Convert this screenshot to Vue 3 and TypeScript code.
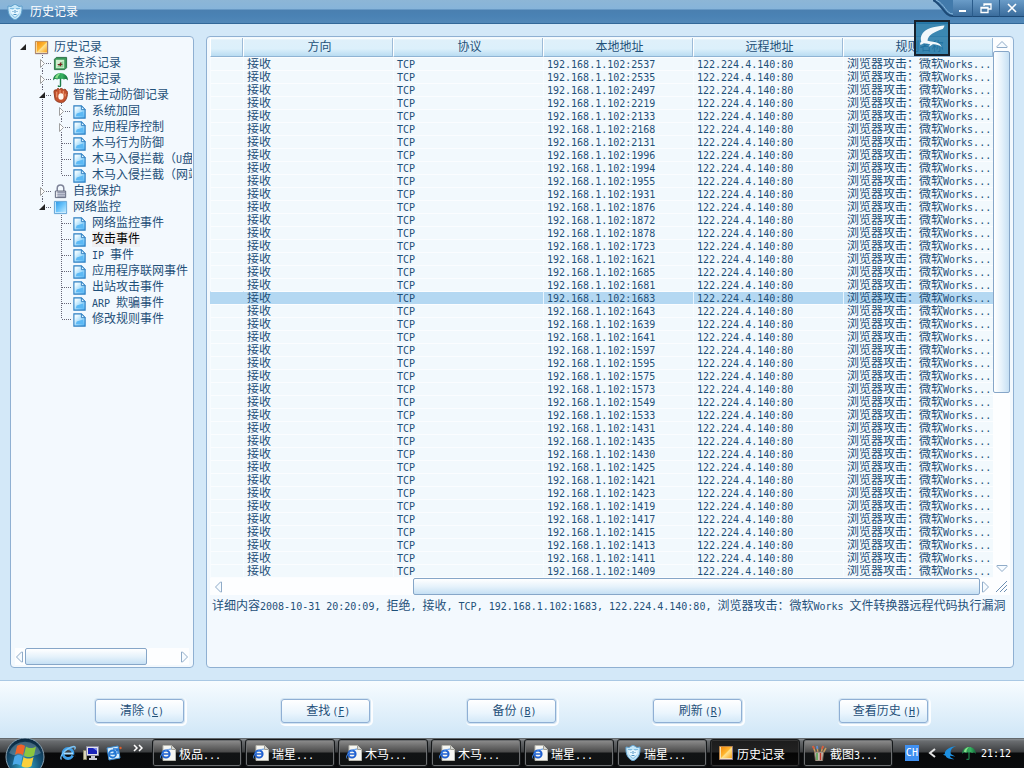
<script setup lang="ts">
import { h, ref, type FunctionalComponent } from 'vue'

type Cell = 'blank' | 'v' | 't' | 'l' | 'open' | 'openroot' | 'openlast' | 'closed'
interface Node { cells: Cell[]; icon: string; text: string }

/* Splits a string so that Latin runs get the half-width face. */
const Mixed: FunctionalComponent<{ text: string }> = (props) =>
  h('span', (props.text.match(/[\x20-\x7e]+|[^\x20-\x7e]+/g) ?? []).map((part) =>
    /^[\x20-\x7e]/.test(part) ? h('span', { class: 'latin' }, part) : part))
Mixed.props = ['text']

const nodes: Node[] = [
  { cells: ['openroot'], icon: 'book', text: '历史记录' },
  { cells: ['blank', 'closed'], icon: 'scan', text: '查杀记录' },
  { cells: ['blank', 'closed'], icon: 'umbrella', text: '监控记录' },
  { cells: ['blank', 'open'], icon: 'glove', text: '智能主动防御记录' },
  { cells: ['blank', 'v', 'closed'], icon: 'page', text: '系统加固' },
  { cells: ['blank', 'v', 'closed'], icon: 'page', text: '应用程序控制' },
  { cells: ['blank', 'v', 't'], icon: 'page', text: '木马行为防御' },
  { cells: ['blank', 'v', 't'], icon: 'page', text: '木马入侵拦截（U盘拦截）' },
  { cells: ['blank', 'v', 'l'], icon: 'page', text: '木马入侵拦截（网站拦截）' },
  { cells: ['blank', 'closed'], icon: 'lock', text: '自我保护' },
  { cells: ['blank', 'openlast'], icon: 'blue', text: '网络监控' },
  { cells: ['blank', 'blank', 't'], icon: 'page', text: '网络监控事件' },
  { cells: ['blank', 'blank', 't'], icon: 'page', text: '攻击事件' },
  { cells: ['blank', 'blank', 't'], icon: 'page', text: 'IP 事件' },
  { cells: ['blank', 'blank', 't'], icon: 'page', text: '应用程序联网事件' },
  { cells: ['blank', 'blank', 't'], icon: 'page', text: '出站攻击事件' },
  { cells: ['blank', 'blank', 't'], icon: 'page', text: 'ARP 欺骗事件' },
  { cells: ['blank', 'blank', 'l'], icon: 'page', text: '修改规则事件' },
]
const currentNode = ref(12)

const guides: Record<Cell, string> = {
  blank: '',
  v: 'M9.5 0V16',
  t: 'M9.5 0V16M10 8.5H19',
  l: 'M9.5 0V8M10 8.5H19',
  open: 'M9.5 0V3M9.5 12V16M13 8.5H19',
  openroot: '',
  openlast: 'M9.5 0V3M13 8.5H19',
  closed: 'M9.5 0V3M9.5 13V16M13 8.5H19',
}

const columns = ['', '方向', '协议', '本地地址', '远程地址', '规则名称']
const ports = [
  2537, 2535, 2497, 2219, 2133, 2168, 2131, 1996, 1994, 1955, 1931, 1876, 1872, 1878,
  1723, 1621, 1685, 1681, 1683, 1643, 1639, 1641, 1597, 1595, 1575, 1573, 1549, 1533,
  1431, 1435, 1430, 1425, 1421, 1423, 1419, 1417, 1415, 1413, 1411, 1409, 1407,
]
const selected = ref(18)

const actions = [
  { label: '清除', key: 'C' },
  { label: '查找', key: 'F' },
  { label: '备份', key: 'B' },
  { label: '刷新', key: 'R' },
  { label: '查看历史', key: 'H' },
]

const tasks = [
  { icon: 'ie', text: '极品...' },
  { icon: 'ie', text: '瑞星...' },
  { icon: 'ie', text: '木马...' },
  { icon: 'ie', text: '木马...' },
  { icon: 'ie', text: '瑞星...' },
  { icon: 'shield', text: '瑞星...' },
  { icon: 'book', text: '历史记录' },
  { icon: 'paint', text: '截图3...' },
]
</script>

<template>
  <div class="screen">
    <svg class="defs" aria-hidden="true">
      <defs>
        <linearGradient id="gOrange" x1="0" y1="0" x2="1" y2="1">
          <stop offset="0" stop-color="#f28a10" /><stop offset=".45" stop-color="#ffb52e" /><stop offset=".55" stop-color="#ffe08a" /><stop offset="1" stop-color="#f6a21c" />
        </linearGradient>
        <linearGradient id="gBlue" x1="0" y1="0" x2="1" y2="1">
          <stop offset="0" stop-color="#2f9be8" /><stop offset=".5" stop-color="#6cc4fb" /><stop offset="1" stop-color="#bfe9ff" />
        </linearGradient>
        <linearGradient id="gPage" x1="0" y1="0" x2="1" y2="1">
          <stop offset=".2" stop-color="#eefaff" /><stop offset=".55" stop-color="#a5dcfc" /><stop offset="1" stop-color="#4aaef0" />
        </linearGradient>
        <linearGradient id="gGreen" x1="0" y1="0" x2="1" y2="0">
          <stop offset="0" stop-color="#1d7d4a" /><stop offset=".6" stop-color="#36b260" /><stop offset="1" stop-color="#12683a" />
        </linearGradient>
        <radialGradient id="gOrb" cx=".5" cy=".75" r=".7">
          <stop offset="0" stop-color="#3bb6d6" /><stop offset=".55" stop-color="#18587c" /><stop offset="1" stop-color="#0c2a42" />
        </radialGradient>
        <symbol id="i-book" viewBox="0 0 16 16">
          <path d="M1.5 1.5h13v13h-13z" fill="#f8e3b4" stroke="#b98346" />
          <path d="M3 2h11v11H3z" fill="url(#gOrange)" />
          <path d="M1.5 14.5h13v-13" fill="none" stroke="#8f7a8a" />
        </symbol>
        <symbol id="i-blue" viewBox="0 0 16 16">
          <path d="M1.5 1.5h13v13h-13z" fill="#d6f0ff" stroke="#5a9fd4" />
          <path d="M3 2h11v11H3z" fill="url(#gBlue)" />
        </symbol>
        <symbol id="i-scan" viewBox="0 0 16 16">
          <path d="M1.5 3.5l2-2h11v11l-2 2h-11z" fill="#3b9a58" stroke="#2b6d45" />
          <path d="M3 4h9v9H3z" fill="#d0eecf" />
          <path d="M4 12l7-7v7z" fill="#8ed49a" />
          <path d="M5 9h5M8 7v4M6 10l3-3" stroke="#7b2420" stroke-width="1.200" />
        </symbol>
        <symbol id="i-umbrella" viewBox="0 0 16 16">
          <path d="M0 9C0 4 4 1 8 1s8 3 8 8c-2-2-3-2-4.500-1C10 7 9 7 8 8 7 7 6 7 4.500 8 3 7 2 7 0 9z" fill="url(#gGreen)" />
          <path d="M5 7C5 5 6 3 8 1.500c-3 0-5 2-6 5z" fill="#8be08a" />
          <path d="M8 7v7c0 2-2 2-2.500.5" fill="none" stroke="#1d7d4a" stroke-width="1.500" />
        </symbol>
        <symbol id="i-glove" viewBox="0 0 16 16">
          <path d="M1 4c0-2 2-3 2.500-1C4 0 6 0 7 1.500 8 0 10 0 11 2c1-1 3-1 3 1 2 0 1.500 3 1 6-1 4-3 6.500-6 6.500S2 14 2 11z" fill="#c4522e" stroke="#8f3a20" />
          <path d="M4 4v6M7.500 2v4M11 3v4M13 6v3" stroke="#f2a67e" />
          <ellipse cx="8.500" cy="9" rx="2.800" ry="3.500" fill="#fff6ee" />
        </symbol>
        <symbol id="i-lock" viewBox="0 0 16 16">
          <path d="M4.500 8V4.500a3.500 3.500 0 017 0V8" fill="none" stroke="#7e8398" stroke-width="1.600" />
          <path d="M2.500 7.500h11v7h-11z" fill="#c9cddb" stroke="#5c6278" />
          <path d="M3 9h10M3 11h10M3 13h10" stroke="#8e94aa" />
          <path d="M4 8v6" stroke="#fff" />
        </symbol>
        <symbol id="i-page" viewBox="0 0 16 16">
          <path d="M2 2h8l4 4v9H2z" fill="url(#gPage)" stroke="#2d7fc2" stroke-width="1.200" />
          <path d="M10 2v4h4z" fill="#e9f8ff" stroke="#2d7fc2" />
          <path d="M5 10l7-2v5H4z" fill="#5cb9f5" />
        </symbol>
        <symbol id="i-shield" viewBox="0 0 16 16">
          <path d="M1 2l3 .5L8 0l4 2.500L15 2c.5 7-1.500 11.500-7 14C2.500 13.500.5 9 1 2z" fill="#c4e6f8" stroke="#5f9fcb" />
          <path d="M3 4h10c0 5-1.500 7.500-5 10-3.500-2.500-5-5-5-10z" fill="#7cbce2" />
          <path d="M3 5l3 .5L8 4l2 1.500L13 5l-.5 4L8 13 3.500 9z" fill="#e6f7ff" />
          <path d="M5.500 7.500h1M9.500 7.500h1M8 6v3M6.500 10.500h3" stroke="#4c92c2" />
        </symbol>
        <symbol id="i-e" viewBox="0 0 16 16">
          <circle cx="8" cy="8.500" r="5" fill="none" stroke="#3f9fe8" stroke-width="2.800" />
          <path d="M4 8.500h9" stroke="#a7dcff" stroke-width="2" />
          <path d="M11 9.700h5V12z" fill="#141414" />
          <path d="M1.500 14.500C-1 12 5 3 14 1.500c1.500 0 1.500 1.500.5 3" fill="none" stroke="#7cc4f5" stroke-width="1.300" />
        </symbol>
        <symbol id="i-ie" viewBox="0 0 16 16">
          <path d="M3 .5h8.500l4 4v11H3z" fill="#f6f6f2" stroke="#b8b8b0" />
          <path d="M11.500.5v4h4" fill="#d8d8d4" stroke="#a0a098" />
          <circle cx="6" cy="9" r="3.600" fill="none" stroke="#1e5fd0" stroke-width="2" />
          <path d="M3 9h7" stroke="#1e5fd0" stroke-width="1.500" />
          <path d="M1 13.500C-1 11 4 4.500 11 4" fill="none" stroke="#4a8fe8" />
        </symbol>
        <symbol id="i-paint" viewBox="0 0 16 16">
          <path d="M4.500 8L2 1M7 8L6 1M10 8l2-7M12 8l3-5" stroke="#c99a5c" stroke-width="1.500" />
          <path d="M2 1l1 3M12 1l-1 3" stroke="#d85a3c" stroke-width="1.800" />
          <path d="M6 1l.5 3" stroke="#5a8ad0" stroke-width="1.800" />
          <path d="M3.500 7h9L11.500 16h-7z" fill="#c8beb2" stroke="#7e6e60" />
          <path d="M6 8v7" stroke="#4fa04c" stroke-width="1.500" /><path d="M9.500 8v7" stroke="#c03a2c" stroke-width="1.500" />
        </symbol>
        <symbol id="i-pc" viewBox="0 0 16 16">
          <path d="M.5 5.500h3v9h-3z" fill="#d8d4b8" stroke="#8c8868" />
          <path d="M3.500 1.500h12v9h-12z" fill="#e2e2ea" stroke="#8a8aa0" />
          <path d="M5 3h9v6H5z" fill="#1a22b8" /><path d="M10 3h4v3z" fill="#7f8cf4" />
          <path d="M8 11h4v2h2v2H6v-2h2z" fill="#c6c6d2" />
        </symbol>
        <symbol id="i-mail" viewBox="0 0 16 16">
          <path d="M1 3l11-2 2 12-11 2z" fill="#d8eefc" stroke="#3c8bd0" />
          <circle cx="6.500" cy="9" r="3.500" fill="none" stroke="#2276d2" stroke-width="1.800" />
          <path d="M4 9h6M7 4h5v5M12 4L7 9" fill="none" stroke="#2276d2" stroke-width="1.400" />
          <circle cx="14.500" cy="3" r="1.200" fill="#e0602c" />
        </symbol>
        <symbol id="i-swallow" viewBox="0 0 16 16">
          <path d="M15 0C8 1 2 4 2 9l-2 1 3 1c1 3 5 4 10 4-3-1-5-2-5-4l6 1-5-3c-1-4 1-7 6-9z" fill="#1d8fe0" />
        </symbol>
      </defs>
    </svg>

    <header class="title">
      <svg class="logo"><use href="#i-shield" /></svg>
      <h1>历史记录</h1>
      <div class="winbtns">
        <svg class="swoop" viewBox="0 0 20 17" preserveAspectRatio="none" aria-hidden="true">
          <path d="M0 0h20v17C11 17 10 5 0 0z" fill="#427aab" />
          <path d="M0 0C10 5 11 16 20 16" fill="none" stroke="#1d4a77" stroke-width="2" />
          <path d="M3 0C12 4 13 14 20 14" fill="none" stroke="#8ab8dc" />
        </svg>
        <button type="button" aria-label="最小化"><svg viewBox="0 0 12 12"><path d="M2 9h7" stroke="#fff" stroke-width="2" /></svg></button>
        <button type="button" class="mid" aria-label="还原"><svg viewBox="0 0 12 12"><path d="M4 4V2h7v5H8M1 5.500h7v5H1zM4 2.500h7M1 6h7" fill="none" stroke="#fff" stroke-width="1.300" /></svg></button>
        <button type="button" class="end" aria-label="关闭"><svg viewBox="0 0 12 12"><path d="M2 2l8 8M10 2l-8 8" stroke="#fff" stroke-width="1.600" /></svg></button>
      </div>
    </header>

    <main class="work">
      <nav class="panel tree">
        <ul>
          <li v-for="(n, i) in nodes" :key="i" :class="{ current: i === currentNode }" @click="currentNode = i">
            <svg v-for="(c, j) in n.cells" :key="j" class="cell" viewBox="0 0 19 16">
              <path v-if="guides[c]" :d="guides[c]" class="guide" />
              <path v-if="c === 'closed'" d="M7.500 4.500v8l4-4z" class="twist" />
              <path v-if="c.startsWith('open')" d="M12 5v6H6z" class="twisted" />
            </svg>
            <svg class="icon" viewBox="0 0 16 16"><use :href="'#i-' + n.icon" /></svg>
            <span class="name"><Mixed :text="n.text" /></span>
          </li>
        </ul>
        <div class="hbar treebar">
          <button type="button" class="arrow" aria-label="向左"><svg viewBox="0 0 10 12"><path d="M7.500 1v10h-1L1.500 6l5-5z" /></svg></button>
          <div class="track"><div class="thumb treethumb"></div></div>
          <button type="button" class="arrow" aria-label="向右"><svg viewBox="0 0 10 12"><path d="M2.500 1v10h1l5-5-5-5z" /></svg></button>
        </div>
      </nav>

      <section class="panel list">
        <div class="grid">
          <div class="tablebox">
            <table>
              <colgroup><col class="first" /><col v-for="k in 5" :key="k" /></colgroup>
              <thead>
                <tr><th v-for="(c, i) in columns" :key="i" scope="col">{{ c }}</th></tr>
              </thead>
              <tbody>
                <tr v-for="(p, i) in ports" :key="i" :class="{ selected: i === selected }" @click="selected = i">
                  <td></td>
                  <td>接收</td>
                  <td><Mixed text="TCP" /></td>
                  <td><Mixed :text="'192.168.1.102:' + p" /></td>
                  <td><Mixed text="122.224.4.140:80" /></td>
                  <td><Mixed text="浏览器攻击：微软Works..." /></td>
                </tr>
              </tbody>
            </table>
          </div>
          <div class="vbar">
            <button type="button" class="arrow" aria-label="向上"><svg viewBox="0 0 12 10"><path d="M1 7.500h10v-1L6 1.500l-5 5z" /></svg></button>
            <div class="vtrack"><div class="thumb vthumb"></div></div>
            <button type="button" class="arrow" aria-label="向下"><svg viewBox="0 0 12 10"><path d="M1 2.500h10v1L6 8.500l-5-5z" /></svg></button>
          </div>
        </div>
        <div class="hbar listbar">
          <button type="button" class="arrow" aria-label="向左"><svg viewBox="0 0 10 12"><path d="M7.500 1v10h-1L1.500 6l5-5z" /></svg></button>
          <div class="track"><div class="thumb listthumb"></div></div>
          <button type="button" class="arrow" aria-label="向右"><svg viewBox="0 0 10 12"><path d="M2.500 1v10h1l5-5-5-5z" /></svg></button>
          <svg class="grip" viewBox="0 0 12 12"><path d="M0 11L11 0M4 11l7-7M8 11l3-3" stroke="#6d8fb2" /></svg>
        </div>
        <p class="detail"><Mixed text="详细内容2008-10-31 20:20:09, 拒绝, 接收, TCP, 192.168.1.102:1683, 122.224.4.140:80, 浏览器攻击：微软Works 文件转换器远程代码执行漏洞" /></p>
      </section>
    </main>

    <footer class="actions">
      <button v-for="a in actions" :key="a.key" type="button">
        {{ a.label }}<span class="latin key">(<u>{{ a.key }}</u>)</span>
      </button>
    </footer>

    <div class="taskbar">
      <button type="button" class="start" aria-label="开始">
        <svg viewBox="0 0 40 32">
          <circle cx="20" cy="19" r="19" fill="url(#gOrb)" stroke="#8ba3b4" />
          <path d="M4 15a17 17 0 0132 0c-9 5-23 5-32 0z" fill="#b9d4e2" opacity=".3" />
          <path d="M12 8c3-2 5-2 8 0l-2 9c-3-2-6-2-8 0z" fill="#f0632a" />
          <path d="M21 8.500c3 2 7 2 10 0l-2 9c-3 2-7 2-10 0z" fill="#8cc63e" />
          <path d="M9.500 18.500c3-2 5-2 8 0l-2 9c-3-2-6-2-8 0z" fill="#4ba8e8" />
          <path d="M18.500 19c3 2 7 2 10 0l-2 9c-3 2-7 2-10 0z" fill="#fbd03c" />
        </svg>
      </button>
      <div class="quick">
        <button type="button" aria-label="浏览器"><svg><use href="#i-e" /></svg></button>
        <button type="button" aria-label="桌面"><svg><use href="#i-pc" /></svg></button>
        <button type="button" aria-label="邮件"><svg><use href="#i-mail" /></svg></button>
        <button type="button" class="more" aria-label="更多"><svg viewBox="0 0 10 8"><path d="M1 1l3 3-3 3M6 1l3 3-3 3" fill="none" stroke="#fff" stroke-width="1.500" /></svg></button>
      </div>
      <div class="tasks">
        <button v-for="(t, i) in tasks" :key="i" type="button" :class="{ active: i === 6 }">
          <svg><use :href="'#i-' + t.icon" /></svg><Mixed :text="t.text" />
        </button>
      </div>
      <div class="tray">
        <span class="latin lang">CH</span>
        <svg class="chev" viewBox="0 0 8 10"><path d="M7 1L2 5l5 4" fill="none" stroke="#e4e4e4" stroke-width="2" /></svg>
        <svg class="ti"><use href="#i-swallow" /></svg>
        <svg class="ti"><use href="#i-umbrella" /></svg>
        <time class="latin">21:12</time>
      </div>
    </div>

    <div class="badge" aria-hidden="true">
      <svg viewBox="0 0 36 36">
        <path d="M32 4C24 5 14 6 9 11c-4 4-4 8-3 11-1 1-2 2-1 4l4-2c3 0 5 1 7 1l-2 3 5-3c4 0 7 1 10 3l-2-3c-3-2-7-3-10-3l-4-1c0-6 8-10 17-13 1-1 2-3 2-4z" fill="#f2f8fb" />
      </svg>
    </div>
  </div>
</template>

<style>
html, body { margin: 0; }
.latin { font-family: "DejaVu Sans Mono", "Liberation Mono", monospace; font-size: 10px; line-height: 1px; white-space: pre; }
</style>

<style scoped>
.screen {
  position: relative;
  display: flex;
  flex-direction: column;
  height: 100vh;
  min-height: 400px;
  overflow: hidden;
  background: #d3e8f8;
  color: #1f5079;
  font-family: "Liberation Sans", "Noto Sans CJK SC", sans-serif;
  font-size: 12px;
}
.defs { position: absolute; width: 0; height: 0; }
button { font: inherit; color: inherit; padding: 0; border: 0; background: none; }
svg { display: block; flex: none; }

.title {
  display: flex;
  align-items: center;
  flex: none;
  height: 24px;
  box-sizing: border-box;
  padding-left: 7px;
  border-bottom: 1px solid #326898;
  background: linear-gradient(#8db6d6 0, #86b4da 9px, #4a7fb0 10px, #4a82b4 16px, #5288b8 100%);
  color: #fff;
}
.logo { width: 16px; height: 16px; }
.title h1 { flex: 1; margin: 0 0 0 7px; font-size: 12px; font-weight: 400; line-height: 16px; }
.winbtns { display: flex; align-self: flex-start; height: 17px; }
.swoop { width: 20px; height: 17px; }
.winbtns button { display: flex; align-items: center; justify-content: center; box-sizing: border-box; width: 20px; background: linear-gradient(#6a9cc8, #3a6c9c); border-bottom: 1px solid #1d4a77; border-right: 1px solid #2a5c8c; }
.winbtns .mid { width: 27px; }
.winbtns .end { width: 24px; border-right: 0; }
.winbtns button svg { width: 12px; height: 12px; }

.work { display: flex; flex: 1; min-height: 0; gap: 12px; padding: 12px 10px; }
.panel {
  display: flex;
  flex-direction: column;
  box-sizing: border-box;
  border: 1px solid #8fb0d2;
  border-radius: 4px;
  background: #f3f9fe;
  overflow: hidden;
}
.tree { flex: none; width: 184px; }
.tree ul { flex: 1; min-height: 0; margin: 0; padding: 2px 1px 0 3px; list-style: none; overflow: hidden; }
.tree li { display: flex; align-items: center; height: 16px; white-space: nowrap; overflow: hidden; }
.cell { width: 19px; height: 16px; }
.icon { width: 15px; height: 15px; margin: 0 3px 0 1px; }
.name { margin-left: 2px; line-height: 16px; }
.current .name { color: #000; background: #f0f0f2; }
.guide { fill: none; stroke: #667; stroke-dasharray: 1 1; }
.twist { fill: #fff; stroke: #a0a0a0; }
.twisted { fill: #222; }

.arrow { display: flex; align-items: center; justify-content: center; }
.arrow path { fill: #f6fbff; stroke: #8fabc8; }
.hbar { display: flex; align-items: stretch; flex: none; height: 17px; background: #fdfeff; }
.hbar .arrow { width: 10px; }
.hbar .arrow svg { width: 10px; height: 12px; }
.track { display: flex; flex: 1; }
.thumb { box-sizing: border-box; border: 1px solid #86a6c8; border-radius: 2px; }
.hbar .thumb { background: linear-gradient(#fff, #e6f2fb 50%, #c6e0f4); }
.treebar { margin: 0 4px 2px; }
.treethumb { width: 85%; max-width: 122px; }
.listbar { padding-left: 4px; }
.listthumb { width: 75%; margin-left: auto; }

.list { flex: 1; min-width: 0; padding: 1px 3px 0; }
.grid { display: flex; flex: 1; min-height: 0; }
.tablebox { flex: 1; min-width: 0; overflow: hidden; }
table { width: 100%; border-collapse: separate; border-spacing: 0; table-layout: fixed; }
.first { width: 33px; }
th {
  box-sizing: border-box;
  height: 19px;
  padding: 0 0 0 3px;
  border-right: 1px solid #9dbbd8;
  border-bottom: 1px solid #8fb4d4;
  border-left: 1px solid #fff;
  background: linear-gradient(#fff 0, #dff0fa 2px, #dcf0fb 60%, #b9dcf2);
  font-weight: 400;
  line-height: 17px;
}
td {
  box-sizing: border-box;
  height: 13px;
  padding: 0 0 0 3px;
  border-top: 1px solid #fbfdff;
  border-left: 1px solid #f8fcff;
  background: #f2f9fd;
  line-height: 12px;
  white-space: nowrap;
  overflow: hidden;
}
.selected td { background: #b4d8f2; border-left-color: #e8f5fe; }
.selected td:nth-child(-n+3) { border-left-color: #b4d8f2; }
.vbar { display: flex; flex-direction: column; flex: none; width: 17px; padding-bottom: 4px; background: #fdfeff; }
.vbar .arrow { flex: none; height: 13px; }
.vbar .arrow svg { width: 12px; height: 10px; }
.vtrack { flex: 1; min-height: 0; }
.vthumb { height: 67%; background: linear-gradient(90deg, #fff, #e6f2fb 50%, #c6e0f4); }
.grip { align-self: center; width: 12px; height: 12px; margin: 0 2px 0 6px; }
.detail { flex: none; height: 72px; margin: 0; padding: 2px 0 0 2px; box-sizing: border-box; line-height: 18px; white-space: nowrap; overflow: hidden; }

.actions {
  display: grid;
  grid-template-columns: repeat(5, 1fr);
  place-items: center;
  flex: none;
  height: 58px;
  box-sizing: border-box;
  padding: 2px 47px 0 46px;
  border-top: 1px solid #a9c8e4;
  background: linear-gradient(#f7fcff, #cfe6f7);
}
.actions button {
  box-sizing: border-box;
  min-width: 89px;
  height: 24px;
  padding: 1px 0 0 6px;
  border: 1px solid #8fafd4;
  border-radius: 3px;
  background: linear-gradient(#fff, #eaf5fd 60%, #d3e8f8);
  box-shadow: 0 0 0 1px #d2e4f2, 1px 1px 0 2px #fbfdff;
  line-height: 20px;
}
.key { margin-left: 2px; }

.taskbar {
  display: flex;
  flex: none;
  height: 30px;
  overflow: hidden;
  background: linear-gradient(#3c4246 0, #8a8e92 1px, #6a6d70 3px, #3c3e40 14px, #08090a 15px, #0a0b0d 100%);
  color: #fff;
}
.start { width: 40px; margin-left: 5px; }
.start svg { width: 40px; height: 32px; }
.quick { display: flex; align-items: center; gap: 7px; flex: none; width: 92px; margin-left: 15px; }
.quick svg { width: 16px; height: 16px; }
.quick .more { align-self: flex-start; margin: 6px 0 0 4px; }
.quick .more svg { width: 10px; height: 8px; }
.tasks { display: flex; flex: 1; min-width: 0; gap: 3px; padding: 1px 0; }
.tasks button {
  display: flex;
  align-items: center;
  flex: 0 1 90px;
  min-width: 0;
  box-sizing: border-box;
  padding-left: 7px;
  border: 1px solid #15181a;
  border-radius: 3px;
  background: linear-gradient(#8f8f8f, #4a4a4a 12px, #111314 13px, #101213);
  box-shadow: inset 0 0 0 1px #6c6e70;
  white-space: nowrap;
  overflow: hidden;
}
.tasks .active { background: linear-gradient(#1c1c1c, #222 12px, #050505 13px, #0a0a0a); box-shadow: inset 0 0 0 1px #333; }
.tasks svg { width: 16px; height: 16px; margin-right: 3px; }
.tray { display: flex; align-items: center; flex: none; padding-right: 13px; }
.lang { width: 14px; height: 16px; margin-right: 9px; background: #3f8ff0; line-height: 16px; text-align: center; }
.chev { width: 8px; height: 10px; margin-right: 7px; }
.ti { width: 14px; height: 14px; margin-right: 5px; }

.badge {
  position: absolute;
  top: 20px;
  right: 74px;
  width: 36px;
  height: 36px;
  box-sizing: border-box;
  border: 2px solid #17212c;
  background: rgba(32, 118, 164, .85);
}
.badge svg { width: 32px; height: 32px; }
</style>
